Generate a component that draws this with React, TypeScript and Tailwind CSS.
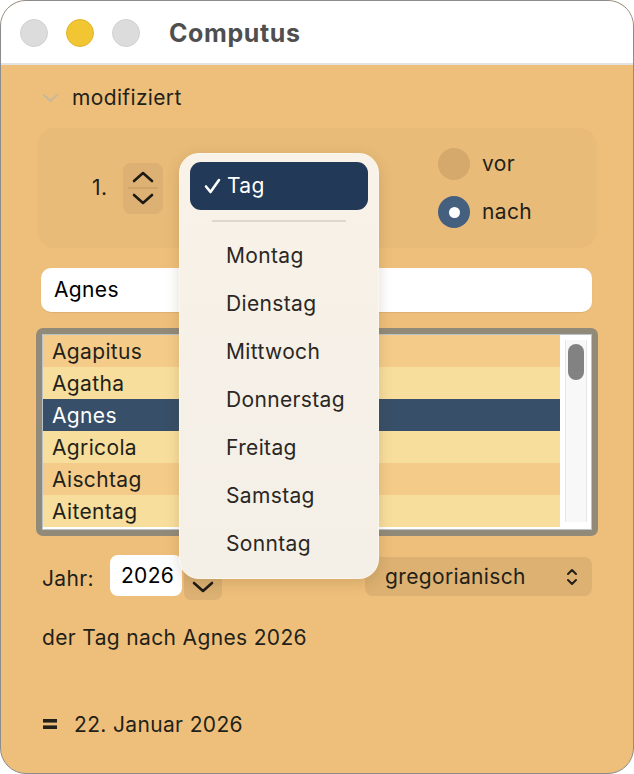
import React from 'react';

const font = { fontFamily: 'Inter, "Noto Sans", sans-serif' };

const names = ['Agapitus', 'Agatha', 'Agnes', 'Agricola', 'Aischtag', 'Aitentag'];
const days = ['Montag', 'Dienstag', 'Mittwoch', 'Donnerstag', 'Freitag', 'Samstag', 'Sonntag'];

function Chevron({ dir, className }: { dir: 'up' | 'down'; className?: string }) {
  return (
    <svg width="24" height="14" viewBox="0 0 24 14" className={className} fill="none" stroke="#1e1a14" strokeWidth="2.6" strokeLinecap="round" strokeLinejoin="round">
      {dir === 'up' ? <path d="M3 11 L12 3 L21 11" /> : <path d="M3 3 L12 11 L21 3" />}
    </svg>
  );
}

export default function App() {
  return (
    <div className="w-[634px] h-[774px] bg-white" style={font}>
      <div className="relative w-[634px] h-[774px] rounded-[26px] border border-[#8c8c8c] overflow-hidden bg-[#eebf7b] flex flex-col text-[21px] tracking-[0.35px]">
        {/* titlebar */}
        <div className="h-[64px] bg-white border-b-2 border-[#e3e3e3] flex items-center shrink-0">
          <div className="flex gap-[18px] ml-[19px] mt-[2px]">
            <span className="w-[28px] h-[28px] rounded-full bg-[#dcdcdc] border border-[#d0d0d0]" />
            <span className="w-[28px] h-[28px] rounded-full bg-[#f2c632] border border-[#e0b42a]" />
            <span className="w-[28px] h-[28px] rounded-full bg-[#dcdcdc] border border-[#d0d0d0]" />
          </div>
          <span className="ml-[29px] mt-[3px] text-[25px] font-bold text-[#4f4f4f] tracking-[0.6px]">Computus</span>
        </div>

        {/* modifiziert */}
        <div className="flex items-center h-[30px] mt-[18px] ml-[41px] gap-[13px]">
          <svg width="17" height="10" viewBox="0 0 17 10" fill="none" stroke="#c9b79a" strokeWidth="2.2" strokeLinecap="round" strokeLinejoin="round">
            <path d="M2 2 L8.5 8 L15 2" />
          </svg>
          <span className="text-[#231f19]">modifiziert</span>
        </div>

        {/* group box */}
        <div className="mt-[15px] mx-[36px] h-[120px] rounded-[18px] bg-[#e8bb78] flex items-center">
          <span className="w-[86px] pl-[55px] text-[#231f19]">1.</span>
          <div className="w-[40px] h-[51px] rounded-[8px] bg-[#dcb173] flex flex-col items-center justify-center gap-[3px]">
            <Chevron dir="up" />
            <span className="w-[30px] h-[2px] bg-[#cfa466]" />
            <Chevron dir="down" />
          </div>
          <div className="ml-[275px] flex flex-col gap-[16px]">
            <div className="flex items-center gap-[12px]">
              <span className="w-[32px] h-[32px] rounded-full bg-[#d4a96b]" />
              <span className="text-[#231f19]">vor</span>
            </div>
            <div className="flex items-center gap-[12px]">
              <span className="w-[32px] h-[32px] rounded-full bg-[#45607f] flex items-center justify-center">
                <span className="w-[11px] h-[11px] rounded-full bg-white" />
              </span>
              <span className="text-[#231f19]">nach</span>
            </div>
          </div>
        </div>

        {/* search field */}
        <div className="mt-[20px] ml-[40px] mr-[41px] h-[44px] rounded-[10px] bg-white flex items-center px-[13px] shadow-[0_1px_1px_rgba(0,0,0,0.08)]">
          <span className="text-black">Agnes</span>
        </div>

        {/* list */}
        <div className="mt-[16px] ml-[35px] mr-[35px] h-[208px] rounded-[7px] bg-[#928a79] p-[6px]">
          <div className="h-full border border-[#b9c3cc] bg-white flex">
            <div className="flex-1 flex flex-col">
              {names.map((n, i) => (
                <div
                  key={n}
                  className={
                    'h-[32px] flex items-center pl-[9px] pt-[2px] ' +
                    (i === 2 ? 'bg-[#374f68] text-white' : i % 2 === 0 ? 'bg-[#f4cb89] text-[#231f19]' : 'bg-[#f8de9c] text-[#231f19]')
                  }
                >
                  {n}
                </div>
              ))}
            </div>
            <div className="w-[31px] bg-white flex justify-center pt-[5px]">
              <div className="w-[22px] h-[182px] bg-[#f8f8f8] border-x border-[#e6e6e6] flex justify-center pt-[4px]">
                <div className="w-[16px] h-[36px] rounded-full bg-[#828282]" />
              </div>
            </div>
          </div>
        </div>

        {/* Jahr row */}
        <div className="mt-[19px] h-[46px] flex items-start">
          <span className="ml-[41px] mt-[8px] text-[#231f19]">Jahr:</span>
          <div className="ml-[16px] w-[72px] h-[41px] rounded-[8px] bg-white flex items-center pl-[11px]">
            <span className="text-black">2026</span>
          </div>
          <div className="ml-[2px] mt-[10px] w-[38px] h-[35px] rounded-[7px] bg-[#dcb173] flex items-end justify-center pb-[6px]">
            <Chevron dir="down" />
          </div>
          <div className="ml-auto mr-[41px] mt-[2px] w-[227px] h-[39px] rounded-[8px] bg-[#dcb172] flex items-center pl-[20px] pr-[14px]">
            <span className="text-[#231f19]">gregorianisch</span>
            <svg className="ml-auto" width="12" height="20" viewBox="0 0 12 20" fill="none" stroke="#231f19" strokeWidth="2" strokeLinecap="round" strokeLinejoin="round">
              <path d="M2 7 L6 3 L10 7" />
              <path d="M2 13 L6 17 L10 13" />
            </svg>
          </div>
        </div>

        <div className="mt-[21px] ml-[41px] text-[#231f19]">der Tag nach Agnes 2026</div>

        <div className="mt-[55px] ml-[42px] flex items-center gap-[17px]">
          <svg width="14" height="12" viewBox="0 0 14 12">
            <rect x="0" y="1" width="14" height="3.6" fill="#231f19" />
            <rect x="0" y="7.4" width="14" height="3.6" fill="#231f19" />
          </svg>
          <span className="text-[#231f19]">22. Januar 2026</span>
        </div>

        {/* popup menu */}
        <div className="absolute left-[178px] top-[152px] w-[200px] h-[426px] rounded-[20px] bg-gradient-to-b from-[#f8f2e8] to-[#f4efe7] border border-[#fbf7ef] shadow-[0_4px_14px_rgba(90,60,20,0.18)] px-[10px] pt-[8px]">
          <div className="h-[48px] rounded-[11px] bg-[#223a57] flex items-center pl-[14px] gap-[6px] text-white">
            <svg width="17" height="16" viewBox="0 0 17 16" fill="none" stroke="white" strokeWidth="2.6" strokeLinecap="round" strokeLinejoin="round">
              <path d="M2 8.5 L6.5 14 L15 2" />
            </svg>
            <span>Tag</span>
          </div>
          <div className="mx-[22px] mt-[10px] h-[2px] bg-[#ddd8cf]" />
          <div className="mt-[10px] flex flex-col">
            {days.map((d) => (
              <div key={d} className="h-[48px] flex items-center pl-[36px] text-[#2a2723]">
                {d}
              </div>
            ))}
          </div>
        </div>
      </div>
    </div>
  );
}
